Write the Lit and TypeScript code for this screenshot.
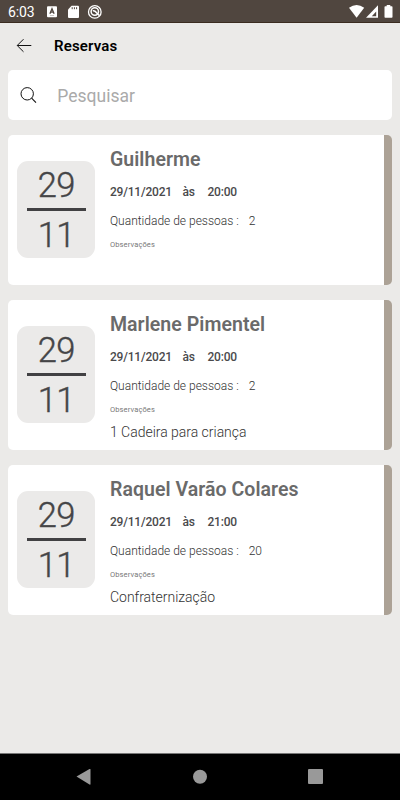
import { LitElement, html, css } from "lit";
import { customElement, property } from "lit/decorators.js";

interface Reserva {
  nome: string;
  dia: string;
  mes: string;
  data: string;
  hora: string;
  pessoas: number;
  obs: string;
}

const RESERVAS: Reserva[] = [
  { nome: "Guilherme", dia: "29", mes: "11", data: "29/11/2021", hora: "20:00", pessoas: 2, obs: "" },
  { nome: "Marlene Pimentel", dia: "29", mes: "11", data: "29/11/2021", hora: "20:00", pessoas: 2, obs: "1 Cadeira para criança" },
  { nome: "Raquel Varão Colares", dia: "29", mes: "11", data: "29/11/2021", hora: "21:00", pessoas: 20, obs: "Confraternização" },
];

@customElement("status-bar")
class StatusBar extends LitElement {
  static styles = css`
    :host { display: flex; align-items: center; height: 23px; box-sizing: border-box; background: #50463f; border-bottom: 1px solid #3a2c20; color: #fff; padding-left: 8px; }
    .time { font-size: 14px; line-height: 22px; width: 38px; padding-top: 2px; white-space: nowrap; letter-spacing: -0.150px; }
    svg { display: block; flex: none; }
    .right { margin-left: auto; }
  `;
  render() {
    return html`
      <span class="time">6:03</span>
      <svg width="60" height="22" viewBox="46 0 60 22">
        <rect x="47" y="6.3" width="10" height="11" rx="1" fill="#fff" />
        <path d="M49.9 13.8 L52 8.7 L54.1 13.8 M50.7 12.2 H53.3" fill="none" stroke="#50463f" stroke-width="1.3" />
        <path d="M50 15.5H54" stroke="#aaa39e" stroke-width=".6" />
        <path d="M71.6 5.7H78a1 1 0 0 1 1 1V17a1 1 0 0 1-1 1H69a1 1 0 0 1-1-1V9.4Z" fill="#fff" />
        <path d="M72.2 7.2v2M74.4 7.2v2M76.6 7.2v2" stroke="#50463f" stroke-width="1" />
        <circle cx="94.8" cy="11.9" r="6.3" fill="none" stroke="#fff" stroke-width="1.3" />
        <circle cx="94.8" cy="11.5" r="3.7" fill="none" stroke="#fff" stroke-width="1.5" />
        <path d="M92.8 10.8C95 10.2 96 12 97 13.2L99.2 15.4" fill="none" stroke="#fff" stroke-width="1.5" />
      </svg>
      <svg class="right" width="54" height="22" viewBox="346 0 54 22">
        <path d="M349 7.7Q356.600 2.200 364.200 7.700L356.600 17.800Z" fill="#fff" />
        <path d="M366 17.700L378 5.300V17.700Z" fill="#fff" />
        <path d="M371.800 16.300L376.200 11.500V16.300Z" fill="#50463f" />
        <path d="M386.700 5H390.300V6.200H391.700a.8.8 0 0 1 .8.8V17a.8.8 0 0 1-.8.8H385.300a.8.8 0 0 1-.8-.8V7a.8.8 0 0 1 .8-.8H386.700Z" fill="#fff" />
      </svg>
    `;
  }
}

@customElement("reserva-card")
class ReservaCard extends LitElement {
  @property({ attribute: false }) reserva!: Reserva;

  static styles = css`
    :host { display: flex; height: 150px; box-sizing: border-box; background: linear-gradient(to right, #fff calc(100% - 8px), #aca296 calc(100% - 8px)); border-radius: 5px; overflow: hidden; padding-left: 9.300px; }
    .date { width: 78px; height: 97px; margin-top: 25.700px; border-radius: 11px; background: #ebeae9; display: flex; flex-direction: column; align-items: center; flex: none; color: #454547; }
    .num { font-size: 34.500px; line-height: 48px; height: 47px; font-weight: 300; letter-spacing: -0.600px; -webkit-text-stroke: .4px #454547; }
    .rule { width: 58.500px; height: 3px; background: #414143; flex: none; }
    .mes { line-height: 49px; }
    .info { margin-left: 14.700px; white-space: nowrap; color: #4a4a4c; }
    .nome { font-size: 19.500px; font-weight: 600; color: #6a6a6a; line-height: 24px; margin-top: 12.700px; letter-spacing: .05px; }
    .linha { display: flex; font-size: 12px; line-height: 16px; }
    .quando { margin-top: 12.300px; font-weight: 500; letter-spacing: -0.200px; }
    .as { width: 25px; margin-left: 10.500px; }
    .qtd { margin-top: 12.500px; font-weight: 300; color: #333; letter-spacing: 0; }
    .n { margin-left: 10px; }
    .rotulo { margin-top: 10px; font-size: 7.500px; line-height: 12px; font-weight: 400; letter-spacing: .13px; color: #777; }
    .obs { margin-top: 7.400px; font-size: 14px; line-height: 18px; font-weight: 300; letter-spacing: -0.020px; color: #333; }
  `;
  render() {
    const r = this.reserva;
    return html`
      <div class="date">
        <span class="num">${r.dia}</span>
        <span class="rule"></span>
        <span class="num mes">${r.mes}</span>
      </div>
      <div class="info">
        <div class="nome">${r.nome}</div>
        <div class="linha quando"><span>${r.data}</span><span class="as">às</span><span>${r.hora}</span></div>
        <div class="linha qtd"><span>Quantidade de pessoas :</span><span class="n">${r.pessoas}</span></div>
        <div class="rotulo">Observações</div>
        <div class="obs">${r.obs}</div>
      </div>
    `;
  }
}

@customElement("app-root")
class AppRoot extends LitElement {
  static styles = css`
    :host { display: flex; flex-direction: column; width: 400px; height: 800px; background: #ebeae8; font-family: Roboto, sans-serif; overflow: hidden; }
    status-bar { flex: none; }
    svg { display: block; flex: none; }
    .header { display: flex; align-items: center; height: 47px; padding: 0 0 2px 16px; box-sizing: border-box; flex: none; }
    .title { margin: 0 0 0 22px; font-size: 15px; line-height: 20px; font-weight: 600; color: #000; letter-spacing: .15px; }
    .search { display: flex; align-items: center; height: 50px; margin: 0 8px; padding-left: 12px; background: #fff; border-radius: 5px; flex: none; }
    .placeholder { margin-left: 20.300px; font-size: 17.500px; line-height: 24px; font-weight: 400; color: #aaa; padding-top: 1px; letter-spacing: 0; }
    .list { display: flex; flex-direction: column; gap: 15.100px; padding: 15.300px 8px 0; flex: 1; }
    .nav { display: flex; height: 47px; background: #000; border-top: 1px solid #777; box-sizing: border-box; justify-content: center; flex: none; }
  `;
  render() {
    return html`
      <status-bar></status-bar>
      <div class="header">
        <svg width="16" height="16" viewBox="0 0 16 16"><path d="M15.300 7.500H1.300M7.500 1.200L1.200 7.500L7.500 13.800" fill="none" stroke="#111" stroke-width="1" /></svg>
        <h1 class="title">Reservas</h1>
      </div>
      <div class="search">
        <svg width="17" height="17" viewBox="0 0 17 17"><circle cx="7.200" cy="6.800" r="6.200" fill="none" stroke="#111" stroke-width="1" /><path d="M11.600 11.200L16 15.600" stroke="#111" stroke-width="1.100" /></svg>
        <span class="placeholder">Pesquisar</span>
      </div>
      <div class="list">
        ${RESERVAS.map((r) => html`<reserva-card .reserva=${r}></reserva-card>`)}
      </div>
      <div class="nav">
        <svg width="280" height="46" viewBox="60 754 280 46" fill="#999">
          <path d="M76.500 776.500L89.500 769Q90.500 768.600 90.500 769.500V784Q90.500 785 89.500 784.500Z" />
          <circle cx="200" cy="776.700" r="7" />
          <rect x="308" y="769" width="15" height="15" rx="1" />
        </svg>
      </div>
    `;
  }
}
